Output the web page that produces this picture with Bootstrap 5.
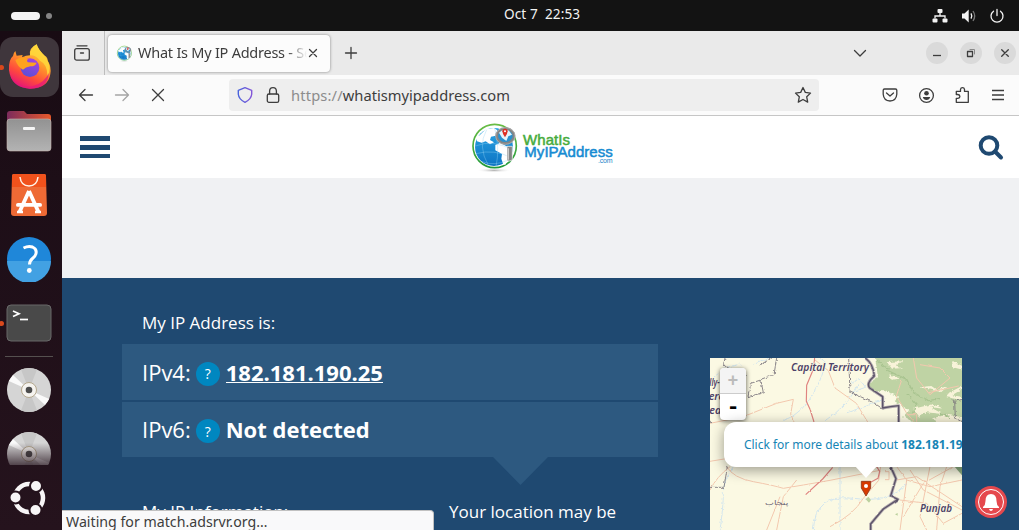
<!DOCTYPE html>
<html lang="en">
<head>
<meta charset="utf-8">
<title>What Is My IP Address</title>
<link href="https://cdn.jsdelivr.net/npm/bootstrap@5.3.0/dist/css/bootstrap.min.css" rel="stylesheet">
<style>
  body { font-family: "Open Sans", "Noto Sans", sans-serif; width: 1019px; height: 530px; }
  svg { display: block; flex: none; }
  .ui { font-family: "Noto Sans", "Open Sans", sans-serif; color: #3d3d3d; white-space: nowrap; }
  .sysbar { height: 31px; background: #131313; color: #f2f2f2; padding: 0 14px 0 11px; }
  .clock { font-size: 13.6px; color: #f2f2f2; white-space: pre; padding-bottom: 2px; margin-left: 452px; width: 90px; letter-spacing: .08px; }
  .pill { width: 29px; height: 8px; background: #f4f4f4; }
  .pill-dot { width: 6px; height: 6px; background: #858585; margin-left: 6px; }
  .dock { width: 62px; background: linear-gradient(#180b13, #1d0e17 30%, #25131d); padding-top: 4px; }
  .slot { height: 64px; width: 58px; }
  .slot.cut { height: 43px; }
  .active-app { background: #3f363c; width: 59px; height: 60px; border-radius: 13px; }
  .run-dot { width: 5px; height: 5px; background: #d9481c; left: -1px; top: 30px; }
  .dock-line { height: 1px; width: 48px; margin: 1px 0 1px 5px; background: #55504f; }
  .tabs { height: 44px; background: #eaeaea; }
  .tab-open { width: 222px; height: 37px; background: #fcfcfc; border-radius: 4px; box-shadow: 0 0 3px rgba(0,0,0,.45); margin-left: 3px; padding-left: 8px; }
  .tab-title { width: 169px; font-size: 14.5px; margin-left: 5px; letter-spacing: -.24px; overflow: hidden; -webkit-mask-image: linear-gradient(90deg, #000 88%, transparent 100%); }
  .split { width: 1px; height: 44px; background: #bdbdbd; margin-left: 12px; }
  .toolbar { height: 41px; background: #fbfbfb; border-bottom: 1px solid #c6c6c6; }
  .urlfield { width: 590px; height: 32px; background: #eee; border-radius: 4px; margin-left: 63px; padding: 0 6px; font-size: 14.7px; }
  .urlfield .proto { color: #8c8c8c; letter-spacing: .15px; }
  .winbtn { width: 22px; height: 22px; background: #dadada; }
  .site-head { height: 62px; background: #fff; }
  .adspace { height: 100px; background: #f0f1f3; }
  .hero { background: #1f4971; color: #fff; height: 252px; padding-left: 60px; }
  .hero h2 { font-size: 17px; line-height: 24px; margin: 0; font-weight: 400; }
  .iprow { background: #2d5980; height: 56px; padding-left: 20px; font-size: 22px; }
  .iprow + .iprow { margin-top: 2px; height: 55px; }
  .q { width: 24px; height: 24px; background: #0087c0; font-size: 14px; margin: 3px 6px 0 5px; }
  .iprow strong, .iprow a { font-weight: 700; font-size: 22px; color: #fff; }
  .iprow a { text-decoration: none; border-bottom: 1px solid #fff; line-height: 20px; }
  .iprow a { margin-top: 1px; }
  .caret { width: 55px; height: 28px; background: #2d5980; clip-path: polygon(0 0, 100% 0, 50% 100%); margin-left: 371px; }
  .mapbox { width: 252px; margin: 80px 0 0 52px; }
  .zoomer { left: 10px; top: 10px; width: 26px; height: 52px; border-radius: 4px; background: #fff; box-shadow: 0 1px 5px rgba(0,0,0,.65); color: #000; font: bold 18px/26px "Liberation Mono", monospace; text-align: center; }
  .zoomer div { height: 26px; }
  .zoomer div:first-child { background: #f4f4f4; color: #bbb; border-bottom: 1px solid #ccc; border-radius: 4px 4px 0 0; }
  .zoomer div + div { font-size: 22px; line-height: 28px; }
  .popup { left: 14px; top: 64px; width: 310px; height: 45px; background: #fff; border-radius: 12px; box-shadow: 0 3px 14px rgba(0,0,0,.4); color: #1685b5; font: 12px/45px "Noto Sans", sans-serif; padding-left: 20px; white-space: nowrap; letter-spacing: -.03px; }
  .popup-tip { left: 145px; top: 108px; width: 22px; height: 12px; background: #fff; clip-path: polygon(0 0, 100% 0, 50% 100%); }
  .status { left: 0; bottom: 0; width: 372px; height: 20px; background: #f9f9fa; border: 1px solid #c1c1c1; border-left: 0; border-bottom: 0; border-radius: 0 4px 0 0; font-size: 14.2px; line-height: 21px; padding-left: 4px; }
  .bell { right: 11px; bottom: 11px; }
  .ln { fill: none; stroke: #3d3d3d; stroke-width: 1.3; stroke-linecap: round; stroke-linejoin: round; }
</style>
</head>
<body class="d-flex flex-column overflow-hidden m-0">

<svg width="0" height="0" class="position-absolute">
  <defs>
    <linearGradient id="ffbody" x1=".8" y1="0" x2=".3" y2="1"><stop offset="0" stop-color="#ffe847"/><stop offset=".4" stop-color="#ff9a2a"/><stop offset=".72" stop-color="#ff4a3c"/><stop offset="1" stop-color="#e3127b"/></linearGradient>
    <linearGradient id="ffcore" x1=".8" y1="0" x2=".3" y2="1"><stop offset="0" stop-color="#a842e0"/><stop offset="1" stop-color="#5a4fd6"/></linearGradient>
    <linearGradient id="fold" x1="0" x2="1"><stop offset="0" stop-color="#7c2b5c"/><stop offset="1" stop-color="#e8592b"/></linearGradient>
    <linearGradient id="gray" x1="0" y1="0" x2="0" y2="1"><stop offset="0" stop-color="#929292"/><stop offset="1" stop-color="#b3b3b3"/></linearGradient>
    <linearGradient id="fade" x1="0" y1="0" x2="0" y2="1"><stop offset=".35" stop-color="#25131d" stop-opacity="0"/><stop offset="1" stop-color="#25131d" stop-opacity=".75"/></linearGradient>
    <linearGradient id="leaf" x1="0" y1="0" x2="0" y2="1"><stop offset="0" stop-color="#69bd45"/><stop offset="1" stop-color="#219a3b"/></linearGradient>
    <linearGradient id="sea" x1="0" y1="0" x2="0" y2="1"><stop offset="0" stop-color="#2aa5e3"/><stop offset="1" stop-color="#0d74c4"/></linearGradient>
    <linearGradient id="viol" x1="0" x2="1"><stop offset="0" stop-color="#4a63dc"/><stop offset="1" stop-color="#8356d8"/></linearGradient>
    <radialGradient id="shade"><stop offset="0" stop-color="#777"/><stop offset="1" stop-color="#fff" stop-opacity="0"/></radialGradient>
    <filter id="terrain" x="-5%" y="-5%" width="110%" height="110%"><feTurbulence type="fractalNoise" baseFrequency=".09" numOctaves="3" seed="4"/><feDisplacementMap in="SourceGraphic" scale="11" xChannelSelector="R" yChannelSelector="G"/></filter>
    <filter id="winding" x="-5%" y="-5%" width="110%" height="110%"><feTurbulence type="fractalNoise" baseFrequency=".06" numOctaves="2" seed="9"/><feDisplacementMap in="SourceGraphic" scale="6" xChannelSelector="R" yChannelSelector="G"/></filter>
    <symbol id="disc" viewBox="0 0 46 46">
      <circle cx="23" cy="23" r="22" fill="#d5d5d5"/>
      <path d="M23 23 15 2.500A22 22 0 0 1 31 2.500zM23 23 15 43.500A22 22 0 0 0 31 43.500z" fill="#c7c7c7"/>
      <path d="M23 23 2.800 14 7 8zM23 23 43.200 32 39 38z" fill="#fafafa"/>
      <circle cx="23" cy="23" r="7.500" fill="#f5f3ef" stroke="#b4a88e"/><circle cx="23" cy="23" r="3.300" fill="#4c4c4c"/>
    </symbol>
    <symbol id="globe" viewBox="90 30 150 156">
      <ellipse cx="162" cy="178" rx="52" ry="7" fill="url(#shade)" opacity=".6"/>
      <circle cx="164" cy="105" r="65" fill="#fff" stroke="url(#leaf)" stroke-width="5"/>
      <circle cx="162" cy="108" r="57" fill="url(#sea)"/>
      <path d="M119 73 138 54l24-3 10 7-5 16-14 3-3 10 12 7-12 6-13-9-12 4-14-4-3-12zM166 102l15-7 21 12 8 0v28l-14 26-6 0-6-18 2-14-20-11z" fill="#fff"/>
      <path d="M106 105q55-22 114 14M108 128q54-15 106 12M140 56q-28 50 5 107M164 51q16 60 4 116M126 152q40 14 76-4" fill="none" stroke="#93d5f4" stroke-width="1.500" opacity=".75"/>
      <path d="M201 106h16v41q-8 5-16 2z" fill="#858585" stroke="#fff" stroke-width="2"/><path d="M203 112h4v34h-4z" fill="#c9c9c9"/>
      <ellipse cx="196" cy="75" rx="26" ry="22" fill="#2a91ce" stroke="#858585" stroke-width="8"/><ellipse cx="196" cy="75" rx="29" ry="25" fill="none" stroke="#bcbcbc" stroke-width="2"/>
      <path d="M177 65q13-14 30-6l9 12-11 5-6 14-13-10z" fill="#e4f4fb"/>
      <path d="M195 79q-8-12-8-18a8 8 0 0 1 16 0q0 6-8 18z" fill="#dd3025"/><circle cx="195" cy="61" r="3" fill="#fff"/>
    </symbol>
  </defs>
</svg>

<header class="sysbar d-flex align-items-center flex-shrink-0">
  <span class="pill rounded-pill"></span><span class="pill-dot rounded-circle"></span>
  <span class="ui clock">Oct 7  22:53</span>
  <div class="d-flex flex-grow-1 justify-content-end align-items-center">
    <svg width="16" height="16" viewBox="0 0 16 16" fill="#f4f4f4"><rect x="5.500" y="1" width="5" height="4" rx="1"/><rect x=".5" y="10.500" width="5" height="4" rx="1"/><rect x="10.500" y="10.500" width="5" height="4" rx="1"/><path d="M3 10.500V8h10v2.500M8 5v3" fill="none" stroke="#f4f4f4" stroke-width="1.300"/></svg>
    <svg style="margin-left:13px" width="16" height="16" viewBox="0 0 16 16"><path d="M1 5.500h2.500L7.700 1.500v13L3.500 10.500H1z" fill="#f4f4f4"/><path d="M10 5.300q1.600 2.700 0 5.400" fill="none" stroke="#f4f4f4" stroke-width="1.300"/><path d="M12 3q3.400 5 0 10" fill="none" stroke="#777" stroke-width="1.300"/></svg>
    <svg style="margin-left:12px" width="16" height="16" viewBox="0 0 16 16"><path d="M4.500 3.200a6 6 0 1 0 7 0M8 1.500v6" fill="none" stroke="#f4f4f4" stroke-width="1.300" stroke-linecap="round"/></svg>
  </div>
</header>

<div class="d-flex flex-grow-1">
  <nav class="dock d-flex flex-column flex-shrink-0">
    <div class="slot position-relative d-flex align-items-center">
      <div class="active-app d-flex align-items-center justify-content-center flex-shrink-0">
        <svg width="44" height="46" viewBox="0 0 132 138">
          <path d="M3 79Q1 47 15 36q1-9 7-15l4 14 18-2-2 7q12-6 24-6Q62 12 86 1q5 17 24 34 9 4 9 15 12 18 8 40-6 42-61 44Q9 130 3 79z" fill="url(#ffbody)"/>
          <circle cx="66" cy="71" r="28" fill="url(#ffcore)"/>
          <path d="M22 48q18-14 38-3-6 6 0 10l26 1q-3 11-19 11-15 3-22 10-16-8-23-29z" fill="#ffa21f"/>
          <path d="M66 34Q65 15 86 1q5 17 24 34 25 33 8 64 2-37-22-49-13-17-30-16z" fill="#ffd83b" opacity=".85"/>
          <path d="M7 94q22 42 68 32 36-10 47-39-1 47-56 47Q18 132 7 94z" fill="#e5187c" opacity=".75"/>
        </svg>
      </div>
      <span class="run-dot rounded-circle position-absolute"></span>
    </div>
    <div class="slot d-flex align-items-center justify-content-center">
      <svg width="46" height="42" viewBox="0 0 46 42"><path d="M1 12V4q0-3 3-3h14l3 3h21q3 0 3 3v6z" fill="url(#fold)"/><rect x="1" y="9" width="44" height="32" rx="3" fill="url(#gray)" stroke="#c9b7b0" stroke-width=".6"/><rect x="17" y="17" width="12" height="3" rx="1" fill="#f5f5f5"/></svg>
    </div>
    <div class="slot d-flex align-items-center justify-content-center">
      <svg width="38" height="44" viewBox="0 0 38 44"><path d="M4 1h30q2 0 2 2l1 37q0 3-3 3H4q-3 0-3-3L2 3q0-2 2-2z" fill="#ee6a35"/><path d="M4 1h30q2 0 2 2v11H2V3q0-2 2-2z" fill="#f0521c"/><path d="M10 4q1 9 9 9t9-9" fill="none" stroke="#fff4e8" stroke-width="1.500"/><path d="M19 18 9.500 39M19 18l9.500 21" fill="none" stroke="#fff" stroke-width="3.800"/><rect x="6" y="30" width="26" height="3.800" rx="1.900" fill="#fff"/><path d="M7 39h6m12 0h6" stroke="#fff" stroke-width="2.500"/></svg>
    </div>
    <div class="slot d-flex align-items-center justify-content-center">
      <svg width="46" height="46" viewBox="0 0 46 46"><circle cx="23" cy="23" r="22" fill="#1f87d9"/><path d="M1 25a22 22 0 0 0 44 0z" fill="#42a1e3"/><path d="M17.500 12q5-2.500 9-1 4.500 2 3.500 6.500-.5 2.500-3.500 5-3 2.500-3 6" fill="none" stroke="#fff" stroke-width="3"/><circle cx="23.300" cy="34.500" r="2.400" fill="#fff"/></svg>
    </div>
    <div class="slot position-relative d-flex align-items-center justify-content-center">
      <svg width="46" height="38" viewBox="0 0 46 38"><rect x="1" y="1" width="44" height="36" rx="4" fill="#494949" stroke="#696969"/><path d="m7 7 6 2.700L7 12.500" fill="none" stroke="#fff" stroke-width="1.700"/><path d="M14 15.500h8" stroke="#fff" stroke-width="1.700"/></svg>
      <span class="run-dot rounded-circle position-absolute"></span>
    </div>
    <div class="dock-line"></div>
    <div class="slot d-flex align-items-center justify-content-center"><svg width="46" height="46"><use href="#disc"/></svg></div>
    <div class="slot cut d-flex justify-content-center overflow-hidden">
      <svg width="46" height="43" class="overflow-visible"><use href="#disc" y="9" width="46" height="46"/><rect y="9" width="46" height="34" fill="url(#fade)"/></svg>
    </div>
    <div class="slot d-flex align-items-center justify-content-center">
      <svg width="38" height="38" viewBox="0 -1 38 38"><circle cx="19" cy="19" r="14" fill="none" stroke="#f7f5f6" stroke-width="4.500"/><g fill="#f7f5f6" stroke="#24121c" stroke-width="2"><circle cx="5.500" cy="18.500" r="6"/><circle cx="26" cy="7" r="6"/><circle cx="25.500" cy="31" r="6"/></g></svg>
    </div>
  </nav>

  <main class="flex-grow-1 d-flex flex-column position-relative overflow-hidden">
    <div class="tabs d-flex align-items-center flex-shrink-0">
      <svg style="margin-left:10px" class="ln" width="20" height="20" viewBox="0 0 20 20"><path d="M5 2.800h10" /><rect x="2.700" y="5.700" width="14.600" height="11.500" rx="2"/><path d="M8.500 10h3"/></svg>
      <span class="split"></span>
      <div class="tab-open d-flex align-items-center">
        <svg width="17" height="17"><use href="#globe"/></svg>
        <span class="ui tab-title">What Is My IP Address - See</span>
        <svg class="ln" style="margin-left:1px" width="10" height="10" viewBox="0 0 10 10"><path d="m1.500 1.500 7 7m0-7-7 7"/></svg>
      </div>
      <svg style="margin-left:14px" class="ln" width="14" height="14" viewBox="0 0 14 14"><path d="M7 1.500v11M1.500 7h11"/></svg>
      <svg style="margin-left:495px" class="ln" width="14" height="14" viewBox="0 0 14 14"><path d="m1.500 4.500 5.500 5.500 5.500-5.500"/></svg>
      <span class="winbtn rounded-circle d-flex align-items-center justify-content-center" style="margin-left:59px"><svg class="ln" width="12" height="12" viewBox="0 0 12 12"><path d="M2 8.500h8" stroke-linecap="butt"/></svg></span>
      <span class="winbtn rounded-circle d-flex align-items-center justify-content-center" style="margin-left:12px"><svg class="ln" width="12" height="12" viewBox="0 0 12 12"><rect x="2.500" y="4.500" width="5" height="5"/><path d="M5 2.500h4.500V7" stroke="#888" stroke-width="1"/></svg></span>
      <span class="winbtn rounded-circle d-flex align-items-center justify-content-center" style="margin-left:12px"><svg class="ln" width="12" height="12" viewBox="0 0 12 12"><path d="m2.700 2.700 6.600 6.600m0-6.600L2.700 9.300"/></svg></span>
    </div>
    <div class="toolbar d-flex align-items-center flex-shrink-0">
      <svg style="margin-left:16px" class="ln" width="16" height="16" viewBox="0 0 16 16"><path d="M14.500 8h-13M7 2.500 1.500 8 7 13.500"/></svg>
      <svg style="margin-left:20px;opacity:.45" class="ln" width="16" height="16" viewBox="0 0 16 16"><path d="M1.500 8h13M9 2.500 14.500 8 9 13.500"/></svg>
      <svg style="margin-left:20px" class="ln" width="16" height="16" viewBox="0 0 16 16"><path d="m2.500 2.500 11 11m0-11-11 11"/></svg>
      <div class="urlfield ui d-flex align-items-center">
        <svg width="20" height="20" viewBox="0 0 20 20"><path d="m10 2.700 6.700 2.600v4q-.5 5-6.700 8-6.200-3-6.700-8v-4z" fill="none" stroke="url(#viol)" stroke-width="1.400" stroke-linejoin="round"/></svg>
        <svg class="ln ms-2" width="20" height="20" viewBox="0 0 20 20"><rect x="4.300" y="9" width="11.400" height="8.300" rx="1.600"/><path d="M6.600 9V6.300q0-3.600 3.400-3.600t3.400 3.600V9"/></svg>
        <span class="flex-grow-1 ms-2"><span class="proto">https://</span>whatismyipaddress.com</span>
        <svg class="ln" width="20" height="20" viewBox="0 0 20 20"><path d="m10 2.500 2.300 4.900 5.200.7-3.800 3.700 1 5.300-4.700-2.600-4.700 2.600 1-5.300L2.500 8.100l5.200-.7z"/></svg>
      </div>
      <svg style="margin-left:61px" class="ln" width="20" height="20" viewBox="0 0 20 20"><path d="M4.500 4h11q1.300 0 1.300 1.300v4q-.6 6.700-6.800 6.700T3.200 9.300v-4Q3.200 4 4.500 4z"/><path d="m6.500 8 3.500 3 3.500-3"/></svg>
      <svg style="margin-left:16px" class="ln" width="20" height="20" viewBox="0 0 20 20"><circle cx="10.500" cy="10.500" r="6.900"/><circle cx="10.500" cy="8.300" r="2.300" fill="#3d3d3d" stroke="none"/><path d="M6.800 11.900h7.400q-.7 3-3.700 3t-3.700-3z" fill="#3d3d3d" stroke="none"/></svg>
      <svg style="margin-left:16px" class="ln" width="20" height="20" viewBox="0 0 20 20"><path d="M4.300 17.300v-4h1.600q2-.2 2-1.900t-2-1.900H4.300V6.400h4.200V4.300q.3-1.600 2-1.600t2 1.600v2.100h3.800v10.900z"/></svg>
      <svg style="margin-left:16px" class="ln" width="20" height="20" viewBox="0 0 20 20"><path d="M4 5.500h12M4 10h12M4 14.500h12" stroke-linecap="butt"/></svg>
    </div>

    <div class="site-head d-flex align-items-center justify-content-between flex-shrink-0">
      <svg style="margin-left:18px" width="30" height="24" viewBox="0 0 30 24" fill="#1f4971"><path d="M0 1h30v5H0zm0 9h30v5H0zm0 9h30v4H0z"/></svg>
      <svg width="148" height="52" viewBox="90 30 444 156" font-family="Liberation Sans, sans-serif">
        <use href="#globe" x="90" y="30" width="150" height="156"/>
        <text x="249" y="101" font-size="45" textLength="141" fill="#46ab3c" stroke="#46ab3c" stroke-width="1.500">WhatIs</text>
        <text x="253" y="137" font-size="45" textLength="265" fill="#168bd2" stroke="#168bd2" stroke-width="1.500">MyIPAddress</text>
        <text x="474" y="155" font-size="21" textLength="44" fill="#1c86c8">.com</text>
      </svg>
      <svg style="margin-right:14px" width="28" height="28" viewBox="0 0 28 28"><g fill="none" stroke="#1f4971" stroke-width="4"><circle cx="12" cy="12.500" r="8.300"/><path d="m18 18.500 6 6" stroke-linecap="round"/></g></svg>
    </div>
    <div class="adspace flex-shrink-0"></div>

    <section class="hero d-flex flex-shrink-0">
      <div style="width:536px">
        <h2 style="padding:33px 0 9px 20px">My IP Address is:</h2>
        <div class="iprow d-flex align-items-center"><span>IPv4:</span><span class="q rounded-circle d-flex align-items-center justify-content-center">?</span><a href="#">182.181.190.25</a></div>
        <div class="iprow d-flex align-items-center"><span>IPv6:</span><span class="q rounded-circle d-flex align-items-center justify-content-center">?</span><strong>Not detected</strong></div>
        <div class="caret"></div>
        <div class="d-flex" style="padding:15px 0 0 20px"><h2 style="width:307px">My IP Information:</h2><h2>Your location may be</h2></div>
      </div>
      <div class="mapbox position-relative overflow-hidden">
        <svg width="252" height="172" viewBox="30 24 756 516" fill="none" stroke-linejoin="round">
          <path fill="#fbf9e3" d="M30 24h756v516H30z"/>
          <g stroke="#d3e6ee" stroke-width="3" filter="url(#terrain)">
            <path d="M30 94 80 52l42-10M440 188l60-20 50-20M375 212q70-45 100-110M455 100l22-14 20 26-30 10M100 350q-30 40-30 80t-10 110M160 40l48-16M250 212q60-20 100-100t10-88M620 400q-45 60-160 45T340 540M420 350v190" />
          </g>
          <g filter="url(#terrain)">
            <path fill="#bfd3a4" d="M524 14h282v212H670l-30-10-30-16 16-20-42-26 14-14-52-20-24 8-20-26 32-20z"/>
            <g fill="#f8f3d9"><path d="M560 36l50-2-24 12 24 8-34 2zM660 112l34-4 14 10 34-8-18 16-30-6zM568 76l30 10-26 4zM640 176l60-14 30 14-40-5 40 22-50-6-24 14zM744 130l42-22v10l-30 18 30 4v10l-46-8zM756 34l36 16v10l-34-8zM700 204l40-10 56 8v24h-86z"/></g>
          </g>
          <path d="M560 60 620 88l20 40 46 24 34-6M620 130l30 34-10 28M720 190l30 14M530 30l36 28" stroke="#a9c490" stroke-width="4" filter="url(#terrain)"/>
          <g stroke="#f3c8ae" stroke-width="3" filter="url(#winding)">
            <path d="M345 30l40 32 20 52 64 46 34 56M30 220l100-20 100-40 50-12-8 44 10 24M30 334l60-10M80 350q20 34 80 45t90 20l60-10 80-14 150-30M90 350q-40 30-60 70M230 540l20-100 40-50M240 440l-40 100M640 24l10 60 40 50 60-50-30-30-60-10M686 128l90-20M605 90l-16 48 30 50 24 28M590 350l30 40 70 20 96-20M620 390l-20 150M600 450l80 10 50 60 56-30M690 350l-30 150 20 40M740 350l-20 60-10 130M630 360l40 60 116 60M590 390l60-10 136 90M610 500l60-100 90-50M490 445l46-54 6-41M490 445q-30 50-100 85M555 365h12v24h-12M620 194h30v22"/>
          </g>
          <path d="M344 24l-4 34-20 48-1 48 12 26 11 36M398 352l-30 35-51 47M530 350l9 14-5 21-22 12" stroke="#e08480" stroke-width="3.500" filter="url(#winding)"/>
          <g stroke="#76707a" stroke-width="2.500" filter="url(#terrain)">
            <path d="M75 24l-4 20 20 18h26l20 18M230 24l-8 50-40 14 8 40-46 12 8-40 30-10M180 45l34-20M82 350l-10 62H30M30 212l10 12M446 24l4 102 36 16 38 18 26 18M786 148l-22 6 2 50 20 12M765 153l-10-5"/>
          </g>
          <g filter="url(#winding)"><path d="M496 24q24 18 27 54-26 22-14 36l39 26v34l24-4 24-3v49M572 350l16 36-16 52 22 10-44 29-18 21-20 24v24" stroke="#80758c" stroke-width="9" opacity=".6"/>
          <path d="M496 24q24 18 27 54-26 22-14 36l39 26v34l24-4 24-3v49M572 350l16 36-16 52 22 10-44 29-18 21-20 24v24" stroke="#5c5369" stroke-width="4"/></g>
          <path d="m764 350 22 26v-26z" fill="#8dad81"/><path d="M497 448l8-8 8 10-6 8zM585 493l8-4v8z" fill="#bcd19e"/>
          <g font-family="Noto Sans, Open Sans, sans-serif" font-style="italic" font-weight="600" font-size="32" fill="#4d4268" stroke="#fbf9e3" stroke-width="4" paint-order="stroke">
            <text x="273" y="62" textLength="234" lengthAdjust="spacingAndGlyphs">Capital Territory</text><text x="28" y="109" textLength="31" lengthAdjust="spacingAndGlyphs">lly-</text><text x="26" y="151">ere</text><text x="28" y="192">ea</text><text x="660" y="487" textLength="96" lengthAdjust="spacingAndGlyphs">Punjab</text>
            <text x="195" y="464" direction="ltr" font-family="DejaVu Sans" font-size="20" font-style="normal" font-weight="400" textLength="70" lengthAdjust="spacingAndGlyphs" fill="#6b6472" stroke="none">پنجاب</text>
          </g>
          <path d="M484 394h28v20l-14 24-14-24z" fill="#d83a00" stroke="#8f3518" stroke-width="2.500"/><circle cx="498" cy="408" r="6" fill="#fff"/>
        </svg>
        <div class="zoomer position-absolute"><div>+</div><div>-</div></div>
        <div class="popup position-absolute">Click for more details about <b>182.181.190.25</b></div>
        <div class="popup-tip position-absolute"></div>
      </div>
    </section>

    <svg class="bell position-absolute" width="34" height="34" viewBox="0 0 34 34"><circle cx="17" cy="17" r="16" fill="#e5484d"/><circle cx="17" cy="17" r="12.500" fill="none" stroke="#fff" stroke-width="1"/><path d="M17 9q5.500 0 5.500 7 0 4 2.500 6v1H9v-1q2.500-2 2.500-6 0-7 5.500-7zM15 24h4q-.5 2-2 2t-2-2z" fill="#fff"/></svg>
    <div class="status ui position-absolute">Waiting for match.adsrvr.org…</div>
  </main>
</div>
<script src="https://cdn.jsdelivr.net/npm/bootstrap@5.3.0/dist/js/bootstrap.bundle.min.js"></script>
</body>
</html>
